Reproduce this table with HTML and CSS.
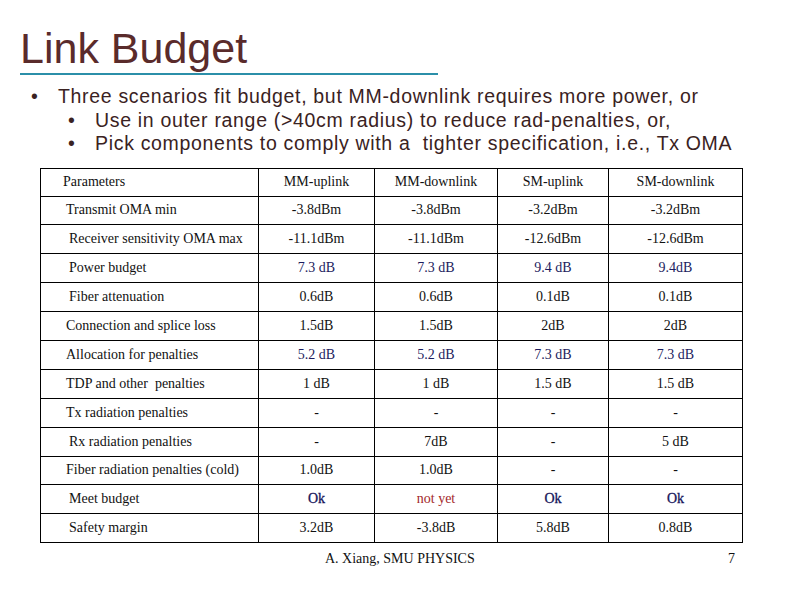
FILE: index.html
```html
<!DOCTYPE html>
<html>
<head>
<meta charset="utf-8">
<link rel="stylesheet" href="styles.css">
</head>
<body>
<div class="slide">
  <h1 class="title">Link Budget</h1>
  <ul class="bullets">
    <li class="lvl1"><span class="dot">•</span><span>Three scenarios fit budget, but MM-downlink requires more power, or</span></li>
    <li class="lvl2"><span class="dot">•</span><span>Use in outer range (&gt;40cm radius) to reduce rad-penalties, or,</span></li>
    <li class="lvl2"><span class="dot">•</span><span>Pick components to comply with a&nbsp; tighter specification, i.e., Tx OMA</span></li>
  </ul>
  <table class="budget">
    <colgroup>
      <col class="c1"><col class="c2"><col class="c3"><col class="c4"><col class="c5">
    </colgroup>
    <tr class="head"><td class="lab p0">Parameters</td><td>MM-uplink</td><td>MM-downlink</td><td>SM-uplink</td><td>SM-downlink</td></tr>
    <tr><td class="lab p1">Transmit OMA min</td><td>-3.8dBm</td><td>-3.8dBm</td><td>-3.2dBm</td><td>-3.2dBm</td></tr>
    <tr><td class="lab p2">Receiver sensitivity OMA max</td><td>-11.1dBm</td><td>-11.1dBm</td><td>-12.6dBm</td><td>-12.6dBm</td></tr>
    <tr class="navy"><td class="lab p2">Power budget</td><td>7.3 dB</td><td>7.3 dB</td><td>9.4 dB</td><td>9.4dB</td></tr>
    <tr><td class="lab p2">Fiber attenuation</td><td>0.6dB</td><td>0.6dB</td><td>0.1dB</td><td>0.1dB</td></tr>
    <tr><td class="lab p1">Connection and splice loss</td><td>1.5dB</td><td>1.5dB</td><td>2dB</td><td>2dB</td></tr>
    <tr class="navy"><td class="lab p1">Allocation for penalties</td><td>5.2 dB</td><td>5.2 dB</td><td>7.3 dB</td><td>7.3 dB</td></tr>
    <tr><td class="lab p1">TDP and other&nbsp; penalties</td><td>1 dB</td><td>1 dB</td><td>1.5 dB</td><td>1.5 dB</td></tr>
    <tr><td class="lab p1">Tx radiation penalties</td><td>-</td><td>-</td><td>-</td><td>-</td></tr>
    <tr><td class="lab p2">Rx radiation penalties</td><td>-</td><td>7dB</td><td>-</td><td>5 dB</td></tr>
    <tr><td class="lab p1">Fiber radiation penalties (cold)</td><td>1.0dB</td><td>1.0dB</td><td>-</td><td>-</td></tr>
    <tr class="navy"><td class="lab p2">Meet budget</td><td class="ok">Ok</td><td class="red">not yet</td><td class="ok">Ok</td><td class="ok">Ok</td></tr>
    <tr><td class="lab p2">Safety margin</td><td>3.2dB</td><td>-3.8dB</td><td>5.8dB</td><td>0.8dB</td></tr>
  </table>
  <div class="footer">
    <span class="author">A. Xiang, SMU PHYSICS</span>
    <span class="pageno">7</span>
  </div>
</div>
</body>
</html>
```

FILE: styles.css
```css
html, body {
  margin: 0;
  padding: 0;
  background: #ffffff;
}

.slide {
  width: 800px;
  height: 600px;
  position: relative;
  overflow: hidden;
  background: #ffffff;
}

.title {
  margin: 27px 0 0 20px;
  width: 418px;
  padding: 0 0 3px 0;
  border-bottom: 2px solid #2b8fa9;
  font-family: "Liberation Sans", Arial, sans-serif;
  font-weight: normal;
  font-size: 43px;
  line-height: 43px;
  color: #5a2b2b;
}

.bullets {
  list-style: none;
  margin: 10px 0 0 0;
  padding: 0;
  font-family: "Liberation Sans", Arial, sans-serif;
  font-size: 19.5px;
  letter-spacing: 0.68px;
  line-height: 23.5px;
  color: #3a2222;
}

.bullets li {
  display: flex;
  white-space: nowrap;
}

.lvl1 { padding-left: 31px; }
.lvl2 { padding-left: 68px; }

.dot {
  width: 27px;
  flex: none;
}

.budget {
  margin: 12px 0 0 40px;
  width: 703px;
  border-collapse: collapse;
  table-layout: fixed;
  font-family: "Liberation Serif", "Times New Roman", serif;
  font-size: 14px;
  color: #111111;
}

.c1 { width: 218px; }
.c2 { width: 116px; }
.c3 { width: 123px; }
.c4 { width: 111px; }
.c5 { width: 134px; }

.budget td {
  border: 1px solid #000000;
  height: 27.9px;
  padding: 0;
  text-align: center;
  vertical-align: middle;
  white-space: nowrap;
}

.budget .head td { height: 27px; }

.budget td.lab {
  text-align: left;
  color: #111111;
}

.p0 { padding-left: 22px !important; }
.p1 { padding-left: 25px !important; }
.p2 { padding-left: 28px !important; }

.navy td { color: #1c1c5e; }
.navy td.red { color: #a3282a; }
.navy td.ok { color: #14145a; -webkit-text-stroke: 0.3px #14145a; }

.footer {
  display: flex;
  margin: 8px 0 0 325px;
  width: 410px;
  justify-content: space-between;
  font-family: "Liberation Serif", "Times New Roman", serif;
  font-size: 14px;
  color: #111111;
}
```
